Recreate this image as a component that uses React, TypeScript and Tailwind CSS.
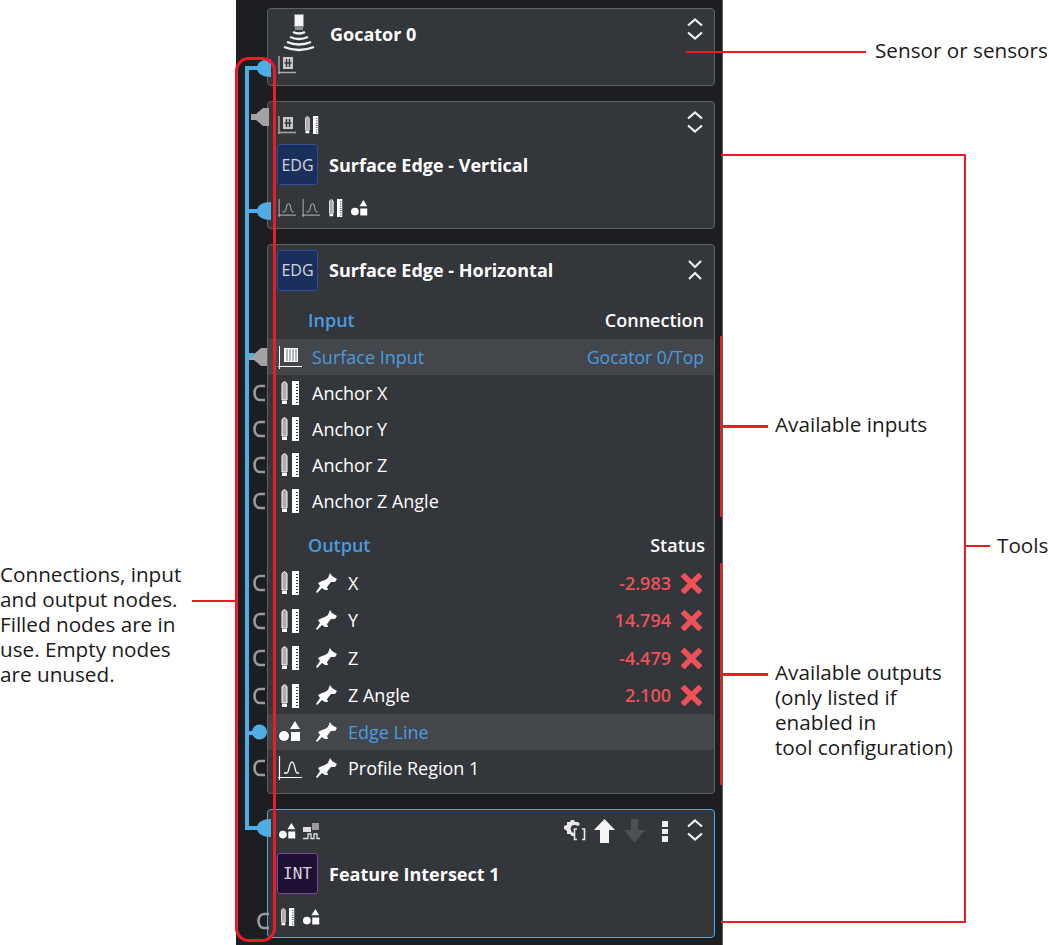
import React from 'react';

const font = { fontFamily: '"Open Sans", "Noto Sans", sans-serif' };

function Measure({ w = 18, h = 24 }: { w?: number; h?: number }) {
  return (
    <svg width={w} height={h} viewBox="0 0 18 24" className="shrink-0">
      <path d="M3.5 0.5 L6 2.5 V19 H1 V2.5 Z" fill="#a9abad" stroke="#fff" strokeWidth="1" />
      <rect x="1" y="20" width="5" height="3" fill="#fff" />
      <rect x="11" y="0" width="7" height="24" fill="#fff" />
      {[3, 6, 9, 12, 15, 18, 21].map((y) => (
        <rect key={y} x="15" y={y} width="2" height="1" fill="#33363b" />
      ))}
    </svg>
  );
}

function SurfaceLarge() {
  return (
    <svg width="24" height="23" viewBox="0 0 24 23" className="shrink-0">
      <path d="M1.5 0 V23 M0 20.5 H24" stroke="#fff" strokeWidth="1" />
      <rect x="6" y="2" width="14" height="14" fill="#fff" />
      <path d="M9 3 V15 M12 3 V15 M15 3 V15 M18 3 V15" stroke="#6b6e72" strokeWidth="1" />
    </svg>
  );
}

function SurfaceSmall() {
  return (
    <svg width="18" height="18" viewBox="0 0 18 18" className="shrink-0">
      <path d="M1 0 V18 M0 16.5 H18" stroke="#a8a9ab" strokeWidth="1.4" />
      <rect x="5" y="1" width="10" height="12" fill="#c9cacb" />
      <path d="M8.5 3 V11 M11.5 3 V11 M6.5 7 H13.5" stroke="#33363b" strokeWidth="1.4" />
    </svg>
  );
}

function Profile({ size = 24, stroke = '#fff' }: { size?: number; stroke?: string }) {
  return (
    <svg width={size} height={size} viewBox="0 0 24 24" className="shrink-0">
      <path d="M1.5 0 V24 M0 21.5 H24" stroke={stroke} strokeWidth="1.2" />
      <path d="M6 17 H9 C11 17 11 6 14 6 C17 6 17 17 19 17 H21" stroke={stroke} strokeWidth="1.3" fill="none" />
    </svg>
  );
}

function Feature({ w = 22, h = 22 }: { w?: number; h?: number }) {
  return (
    <svg width={w} height={h} viewBox="0 0 22 22" className="shrink-0">
      <path d="M16 0 L21 8 H11 Z" fill="#fff" />
      <rect x="12" y="11" width="9" height="9" fill="#fff" />
      <circle cx="5" cy="15" r="5" fill="#fff" />
    </svg>
  );
}

function Pin() {
  return (
    <svg width="22" height="21" viewBox="0 0 22 21" className="shrink-0">
      <path
        d="M14 0 L16 3 L21 6 L19 9 L15 9 L11 14 L12 17 L9 17 L6 15 L1 20 L0 19 L4 13 L2 10 L6 8 L9 7 L12 5 Z"
        fill="#fff"
      />
    </svg>
  );
}

function Chevrons({ open = false }: { open?: boolean }) {
  return (
    <svg width="16" height="22" viewBox="0 0 16 22" className="shrink-0">
      <path
        d={open ? 'M2 2 L8 8 L14 2 M2 20 L8 14 L14 20' : 'M1 7.5 L8 1.5 L15 7.5 M1 14.5 L8 20.5 L15 14.5'}
        stroke="#f0f0f0"
        strokeWidth="2.2"
        fill="none"
      />
    </svg>
  );
}

function RedX() {
  return (
    <svg width="21" height="21" viewBox="0 0 21 21" className="shrink-0">
      <path d="M3.5 3.5 L17.5 17.5 M17.5 3.5 L3.5 17.5" stroke="#ef5159" strokeWidth="5.5" strokeLinecap="square" />
    </svg>
  );
}

function Arrow({ color, down = false }: { color: string; down?: boolean }) {
  return (
    <svg width="21" height="24" viewBox="0 0 21 24" className="shrink-0">
      <path d={down ? 'M7 0 H14 V11 H21 L10.5 24 L0 11 H7 Z' : 'M10.5 0 L21 11 H15 V24 H6 V11 H0 Z'} fill={color} />
    </svg>
  );
}

function Gear() {
  return (
    <svg width="22" height="22" viewBox="0 0 22 22" className="shrink-0">
      <path
        d="M7 1 H10 L11 3 L14 3 L16 5 L14 7 L11 6 C8 6 6 8 7 11 C7 13 9 14 10 14 V17 L8 17 L6 15 L3 15 L3 12 L0 10 L0 7 L3 6 L3 3 L6 3 Z"
        fill="#e8e8e8"
      />
      <path d="M13 10 H10.5 V20.5 H13 M18 10 H20.5 V20.5 H18" stroke="#e8e8e8" strokeWidth="1.6" fill="none" />
    </svg>
  );
}

function Kebab() {
  return (
    <div className="flex flex-col gap-[2px] shrink-0">
      <div className="w-[6px] h-[6px] bg-[#f0f0f0]" />
      <div className="w-[6px] h-[5px] bg-[#f0f0f0]" />
      <div className="w-[6px] h-[6px] bg-[#f0f0f0]" />
    </div>
  );
}

function Sensor() {
  return (
    <svg width="32" height="40" viewBox="0 0 32 40" className="shrink-0">
      <rect x="11.5" y="0.5" width="9" height="12" fill="#f4f4f4" stroke="#8b8d90" />
      <rect x="12" y="13" width="8" height="3" fill="#8b8d90" />
      <g stroke="#f2f2f2" strokeWidth="2.4" fill="none">
        <path d="M10 18 Q16 21 22 18" />
        <path d="M7 23 Q16 27 25 23" />
        <path d="M4 28 Q16 33 28 28" />
        <path d="M1 33 Q16 39 31 33" />
      </g>
    </svg>
  );
}

function EmptyNode() {
  return (
    <svg width="13" height="18" viewBox="0 0 13 18" className="absolute left-[-15px] top-1/2 -translate-y-1/2">
      <path d="M12 2 H7 C3.5 2 1.5 5 1.5 9 C1.5 13 3.5 16 7 16 H12" stroke="#9a9a9a" strokeWidth="2.6" fill="none" />
    </svg>
  );
}

function GreyNode({ className }: { className: string }) {
  return (
    <svg width="18" height="20" viewBox="0 0 18 20" className={`absolute ${className}`}>
      <path d="M0 7 H5 L12 1 H18 V19 H12 L5 13 H0 Z" fill="#a3a3a3" />
    </svg>
  );
}

function BlueNode({ className }: { className: string }) {
  return (
    <svg width="14" height="18" viewBox="0 0 14 18" className={`absolute ${className}`}>
      <path d="M14 0 V18 C6 18 0 15 0 9 C0 3 6 0 14 0 Z" fill="#4fade6" />
    </svg>
  );
}

function Card({ h, active = false, children }: { h: string; active?: boolean; children: React.ReactNode }) {
  return (
    <div className={`relative ${h} w-[448px] rounded-[4px] border bg-[#33363b] ${active ? 'border-[#4fa8e0]' : 'border-[#606163]'}`}>
      {children}
    </div>
  );
}

function ToolBadge({ label, variant }: { label: string; variant: 'edg' | 'int' }) {
  return (
    <div
      className={`w-[41px] h-[41px] shrink-0 rounded-[3px] border flex items-center justify-center text-[16px] text-[#d5d6d8] ${
        variant === 'edg' ? 'bg-[#1b2f5c] border-[#2f4f96]' : 'bg-[#1e0f33] border-[#7a4a9c] font-[DejaVu_Sans_Mono]'
      }`}
    >
      {label}
    </div>
  );
}

function Title({ children }: { children: React.ReactNode }) {
  return <div className="text-[18px] font-bold text-white leading-none whitespace-nowrap">{children}</div>;
}

function InputRow({ label, conn, used }: { label: string; conn?: string; used?: boolean }) {
  return (
    <div className={`relative h-[36px] flex items-center pl-[10px] pr-[10px] ${used ? 'bg-[#43474b]' : ''}`}>
      {used ? <GreyNode className="left-[-19px] top-[8px]" /> : <EmptyNode />}
      <div className="w-[24px] flex justify-center">{used ? <SurfaceLarge /> : <Measure />}</div>
      <span className={`ml-[10px] text-[18px] ${used ? 'text-[#4a9be0]' : 'text-white'}`}>{label}</span>
      {conn && <span className="ml-auto text-[17.5px] text-[#4a9be0]">{conn}</span>}
    </div>
  );
}

function OutputRow({ label, value, icon, used, h }: { label: string; value?: string; icon: React.ReactNode; used?: boolean; h: string }) {
  return (
    <div className={`relative ${h} flex items-center pl-[10px] pr-[12px] ${used ? 'bg-[#43474b]' : ''}`}>
      {used ? (
        <svg width="15" height="18" viewBox="0 0 15 18" className="absolute left-[-16px] top-[9px]">
          <circle cx="7.5" cy="9" r="7.5" fill="#4fade6" />
        </svg>
      ) : (
        <EmptyNode />
      )}
      <div className="w-[24px] flex justify-center">{icon}</div>
      <div className="ml-[14px]">
        <Pin />
      </div>
      <span className={`ml-[10px] text-[18px] ${used ? 'text-[#4a9be0]' : 'text-white'}`}>{label}</span>
      {value && (
        <>
          <span className="ml-auto text-[18px] font-semibold text-[#ef5159]">{value}</span>
          <div className="ml-[10px]">
            <RedX />
          </div>
        </>
      )}
    </div>
  );
}

function SensorCard() {
  return (
    <Card h="h-[78px]">
      <div className="flex pl-[15px] pr-[11px] pt-[5px]">
        <Sensor />
        <div className="ml-[15px] mt-[11px]">
          <Title>Gocator 0</Title>
        </div>
        <div className="ml-auto mt-[4px]">
          <Chevrons />
        </div>
      </div>
      <div className="pl-[10px] mt-[2px]">
        <SurfaceSmall />
      </div>
      <BlueNode className="left-[-11px] top-[50px]" />
    </Card>
  );
}

function VerticalCard() {
  return (
    <Card h="h-[128px]">
      <div className="flex items-start pl-[10px] pr-[11px] pt-[9px]">
        <div className="flex gap-[8px] pt-[5px]">
          <SurfaceSmall />
          <Measure w={15} h={18} />
        </div>
        <div className="ml-auto">
          <Chevrons />
        </div>
      </div>
      <div className="flex items-center pl-[9px] mt-[10px]">
        <ToolBadge label="EDG" variant="edg" />
        <div className="ml-[11px]">
          <Title>Surface Edge - Vertical</Title>
        </div>
      </div>
      <div className="flex items-center pl-[10px] mt-[14px]">
        <Profile size={18} stroke="#bfc0c2" />
        <div className="ml-[6px]">
          <Profile size={18} stroke="#bfc0c2" />
        </div>
        <div className="ml-[8px]">
          <Measure w={15} h={18} />
        </div>
        <div className="ml-[8px]">
          <Feature w={17} h={17} />
        </div>
      </div>
      <GreyNode className="left-[-17px] top-[5px]" />
      <BlueNode className="left-[-11px] top-[100px]" />
    </Card>
  );
}

function HorizontalCard() {
  return (
    <Card h="h-[550px]">
      <div className="flex items-center h-[50px] pl-[9px] pr-[11px]">
        <ToolBadge label="EDG" variant="edg" />
        <div className="ml-[11px]">
          <Title>Surface Edge - Horizontal</Title>
        </div>
        <div className="ml-auto">
          <Chevrons open />
        </div>
      </div>
      <div className="flex items-center justify-between h-[44px] pt-[6px] pl-[40px] pr-[10px] text-[18px] font-semibold">
        <span className="text-[#4a9be0]">Input</span>
        <span className="text-white">Connection</span>
      </div>
      <InputRow label="Surface Input" conn="Gocator 0/Top" used />
      <InputRow label="Anchor X" />
      <InputRow label="Anchor Y" />
      <InputRow label="Anchor Z" />
      <InputRow label="Anchor Z Angle" />
      <div className="flex items-center justify-between h-[45px] pt-[7px] pl-[40px] pr-[9px] text-[18px] font-semibold">
        <span className="text-[#4a9be0]">Output</span>
        <span className="text-white">Status</span>
      </div>
      <OutputRow h="h-[38px]" label="X" value="-2.983" icon={<Measure />} />
      <OutputRow h="h-[37px]" label="Y" value="14.794" icon={<Measure />} />
      <OutputRow h="h-[38px]" label="Z" value="-4.479" icon={<Measure />} />
      <OutputRow h="h-[37px]" label="Z Angle" value="2.100" icon={<Measure />} />
      <OutputRow h="h-[36px]" label="Edge Line" icon={<Feature />} used />
      <OutputRow h="h-[36px]" label="Profile Region 1" icon={<Profile />} />
    </Card>
  );
}

function IntersectCard() {
  return (
    <Card h="h-[129px]" active>
      <div className="flex items-start pl-[11px] pr-[11px] pt-[9px]">
        <div className="flex gap-[7px] pt-[4px]">
          <Feature w={17} h={17} />
          <svg width="17" height="17" viewBox="0 0 17 17" className="shrink-0">
            <rect x="9" y="0" width="7" height="7" fill="#9a9a9a" />
            <rect x="0" y="4" width="8" height="5" fill="#e0e0e0" />
            <path d="M0 15.5 H5 V11 H8 V15.5 H11 V11 H14 V15.5 H17" stroke="#e0e0e0" strokeWidth="1.3" fill="none" />
          </svg>
        </div>
        <div className="ml-auto flex items-start">
          <Gear />
          <div className="ml-[8px]">
            <Arrow color="#f5f5f5" />
          </div>
          <div className="ml-[9px]">
            <Arrow color="#4d5054" down />
          </div>
          <div className="ml-[17px] mt-[2px]">
            <Kebab />
          </div>
          <div className="ml-[19px]">
            <Chevrons />
          </div>
        </div>
      </div>
      <div className="flex items-center pl-[9px] mt-[10px]">
        <ToolBadge label="INT" variant="int" />
        <div className="ml-[11px]">
          <Title>Feature Intersect 1</Title>
        </div>
      </div>
      <div className="flex items-center pl-[12px] mt-[14px]">
        <Measure w={15} h={18} />
        <div className="ml-[8px]">
          <Feature w={17} h={17} />
        </div>
      </div>
      <BlueNode className="left-[-11px] top-[9px]" />
      <svg width="13" height="18" viewBox="0 0 13 18" className="absolute left-[-11px] top-[102px]">
        <path d="M12 2 H7 C3.5 2 1.5 5 1.5 9 C1.5 13 3.5 16 7 16 H12" stroke="#9a9a9a" strokeWidth="2.6" fill="none" />
      </svg>
    </Card>
  );
}

function Hline({ className }: { className: string }) {
  return <div className={`absolute h-[2px] bg-[#ed1c24] ${className}`} />;
}

function Vline({ className }: { className: string }) {
  return <div className={`absolute w-[2px] bg-[#ed1c24] ${className}`} />;
}

function Note({ className, children }: { className: string; children: React.ReactNode }) {
  return <div className={`absolute text-[20.7px] leading-[25px] text-[#1a1a1a] whitespace-pre ${className}`}>{children}</div>;
}

export default function App() {
  return (
    <div className="relative w-[1049px] h-[945px] bg-white overflow-hidden" style={font}>
      <div className="ml-[236px] w-[487px] h-[945px] bg-[#1d1e21] border-r border-[#5c5d60] pt-[8px] pl-[31px] flex flex-col gap-[15px]">
        <SensorCard />
        <VerticalCard />
        <HorizontalCard />
        <IntersectCard />
      </div>

      {/* connection lines */}
      <svg width="30" height="945" className="absolute left-[240px] top-0">
        <path d="M18 68 H7 V828 H18 M7 211 H18 M7 355 H14 M7 733 H16" stroke="#4fade6" strokeWidth="4" fill="none" />
      </svg>

      {/* annotations */}
      <div className="absolute left-[235px] top-[57px] w-[41px] h-[885px] rounded-[14px] border-[3px] border-[#ed1c24]" />
      <Hline className="left-[686px] top-[51px] w-[180px]" />
      <Note className="left-[875px] top-[38px]">Sensor or sensors</Note>

      <Hline className="left-[721px] top-[154px] w-[245px]" />
      <Hline className="left-[721px] top-[921px] w-[245px]" />
      <Vline className="left-[964px] top-[154px] h-[769px]" />
      <Hline className="left-[966px] top-[545px] w-[24px]" />
      <Note className="left-[997px] top-[533px]">Tools</Note>

      <Vline className="left-[720px] top-[336px] h-[181px]" />
      <Hline className="left-[721px] top-[425px] w-[47px] h-[3px]" />
      <Note className="left-[775px] top-[412px]">Available inputs</Note>

      <Vline className="left-[720px] top-[563px] h-[222px]" />
      <Hline className="left-[721px] top-[673px] w-[47px] h-[3px]" />
      <Note className="left-[775px] top-[660px]">
        {'Available outputs\n(only listed if\nenabled in\ntool configuration)'}
      </Note>

      <Hline className="left-[192px] top-[600px] w-[44px]" />
      <Note className="left-0 top-[562px]">
        {'Connections, input\nand output nodes.\nFilled nodes are in\nuse. Empty nodes\nare unused.'}
      </Note>
    </div>
  );
}
